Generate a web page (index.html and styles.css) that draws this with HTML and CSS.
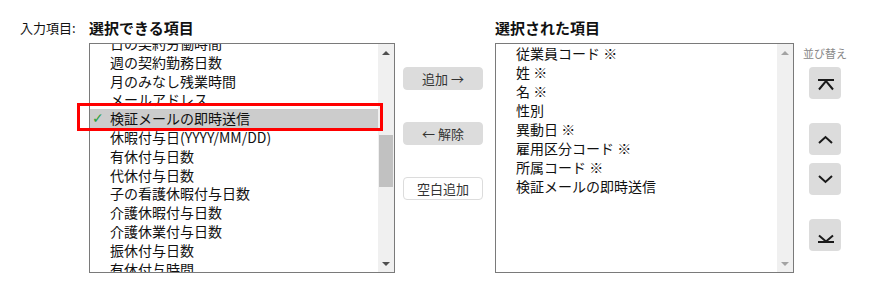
FILE: index.html
```html
<!DOCTYPE html>
<html>
  <head>
    <meta charset="UTF-8" />
    <title>出力項目の設定</title>
    <link rel="stylesheet" href="styles.css">
  </head>
  <body>
    <div class="editor">
      <div class="field-label">入力項目:</div>

      <div class="panel panel-left">
        <h2 class="panel-title">選択できる項目</h2>
        <div class="listbox">
          <div class="list-view">
            <ul class="items items-scrolled">
              <li class="item">日の契約労働時間</li>
              <li class="item">週の契約勤務日数</li>
              <li class="item">月のみなし残業時間</li>
              <li class="item">メールアドレス</li>
              <li class="item selected"><span class="check">✓</span>検証メールの即時送信</li>
              <li class="item">休暇付与日(YYYY/MM/DD)</li>
              <li class="item">有休付与日数</li>
              <li class="item">代休付与日数</li>
              <li class="item">子の看護休暇付与日数</li>
              <li class="item">介護休暇付与日数</li>
              <li class="item">介護休業付与日数</li>
              <li class="item">振休付与日数</li>
              <li class="item">有休付与時間</li>
            </ul>
          </div>
          <div class="scrollbar">
            <div class="sb-arrow"><span class="tri tri-up"></span></div>
            <div class="sb-track"><div class="sb-thumb"></div></div>
            <div class="sb-arrow"><span class="tri tri-down"></span></div>
          </div>
          <div class="mark"></div>
        </div>
      </div>

      <div class="actions">
        <button class="btn">追加 →</button>
        <button class="btn">← 解除</button>
        <button class="btn btn-outline">空白追加</button>
      </div>

      <div class="panel panel-right">
        <h2 class="panel-title">選択された項目</h2>
        <div class="listbox">
          <div class="list-view">
            <ul class="items items-fixed">
              <li class="item">従業員コード ※</li>
              <li class="item">姓 ※</li>
              <li class="item">名 ※</li>
              <li class="item">性別</li>
              <li class="item">異動日 ※</li>
              <li class="item">雇用区分コード ※</li>
              <li class="item">所属コード ※</li>
              <li class="item">検証メールの即時送信</li>
            </ul>
          </div>
          <div class="scrollbar disabled">
            <div class="sb-arrow"><span class="tri tri-up"></span></div>
            <div class="sb-track"></div>
            <div class="sb-arrow"><span class="tri tri-down"></span></div>
          </div>
        </div>
      </div>

      <div class="sorter">
        <div class="sorter-label">並び替え</div>
        <button class="sort-btn first" title="先頭へ">
          <svg viewBox="0 0 32 32" width="32" height="32"><path d="M9 13h16M10 22.5l7-8.5 7 8.5"/></svg>
        </button>
        <button class="sort-btn up" title="上へ">
          <svg viewBox="0 0 32 32" width="32" height="32"><path d="M10 20l6.5-6 6.5 6"/></svg>
        </button>
        <button class="sort-btn down" title="下へ">
          <svg viewBox="0 0 32 32" width="32" height="32"><path d="M10 13l6.5 6 6.5-6"/></svg>
        </button>
        <button class="sort-btn last" title="最後へ">
          <svg viewBox="0 0 32 32" width="32" height="32"><path d="M10 16.5l7 6 7-6M9 23h16"/></svg>
        </button>
      </div>
    </div>
  </body>
</html>
```

FILE: styles.css
```css
body {
  margin: 0;
  padding: 0;
  background-color: #fff;
  color: #222;
  font-family: "Noto Sans CJK JP", "Noto Sans", sans-serif;
}

.editor {
  display: flex;
  align-items: flex-start;
  padding-top: 18px;
}

.field-label {
  width: 69px;
  padding-left: 20px;
  font-size: 13px;
  line-height: 20px;
  color: #111;
}

.panel-title {
  margin: 0 0 5px 0;
  font-size: 15px;
  font-weight: bold;
  line-height: 20px;
  color: #111;
}

.panel-left {
  width: 306px;
}

.panel-right {
  width: 299px;
}

.listbox {
  position: relative;
  display: flex;
  height: 230px;
  box-sizing: border-box;
  border: 1px solid #7a7a7a;
  background-color: #fff;
}

.list-view {
  flex: 1;
  overflow: hidden;
}

.items {
  list-style: none;
  margin: 0;
  padding: 0;
}

.items-scrolled {
  margin-top: -10px;
}

.item {
  position: relative;
  height: 18.8px;
  line-height: 18.8px;
  padding-left: 20px;
  font-size: 14px;
  color: #111;
  white-space: nowrap;
}

.items-fixed .item {
  height: 19px;
  line-height: 19px;
}

.item.selected {
  background-color: #cccccc;
}

.check {
  position: absolute;
  left: 2px;
  top: 0;
  font-family: "DejaVu Sans", sans-serif;
  font-size: 14px;
  font-weight: bold;
  color: #28a03c;
}

/* red highlight frame drawn over the selected row */
.mark {
  position: absolute;
  top: 59px;
  left: -13px;
  width: 306px;
  height: 28px;
  box-sizing: border-box;
  border: 3px solid #f00;
}

.scrollbar {
  width: 16px;
  display: flex;
  flex-direction: column;
  background-color: #f0f0f0;
}

.sb-arrow {
  height: 17px;
  display: flex;
  align-items: center;
  justify-content: center;
}

.sb-track {
  flex: 1;
}

.sb-thumb {
  margin: 74px 1px 0 1px;
  height: 52px;
  background-color: #c1c1c1;
}

.tri {
  width: 0;
  height: 0;
  border-left: 4px solid transparent;
  border-right: 4px solid transparent;
}

.tri-up {
  border-bottom: 4px solid #505050;
}

.tri-down {
  border-top: 4px solid #505050;
}

.disabled .tri-up {
  border-bottom-color: #a3a3a3;
}

.disabled .tri-down {
  border-top-color: #a3a3a3;
}

.actions {
  width: 100px;
  box-sizing: border-box;
  padding: 49px 0 0 8px;
  display: flex;
  flex-direction: column;
  gap: 32px;
}

.btn {
  width: 80px;
  height: 23px;
  padding: 0;
  border: 1px solid #dcdcdc;
  border-radius: 4px;
  background-color: #dcdcdc;
  font-family: inherit;
  font-size: 13px;
  line-height: 21px;
  color: #333;
}

.btn-outline {
  background-color: #fff;
  border-color: #dcdcdc;
}

.sorter {
  padding: 27px 0 0 9px;
  display: flex;
  flex-direction: column;
}

.sorter-label {
  font-size: 11px;
  line-height: 16px;
  color: #888;
  margin-bottom: 6px;
}

.sort-btn {
  width: 32px;
  height: 32px;
  margin-left: 6px;
  padding: 0;
  border: none;
  border-radius: 4px;
  background-color: #dcdcdc;
}

.sort-btn svg {
  display: block;
  fill: none;
  stroke: #1a1a1a;
  stroke-width: 2;
}

.sort-btn.up {
  margin-top: 24px;
}

.sort-btn.down {
  margin-top: 8px;
}

.sort-btn.last {
  margin-top: 24px;
}
```
